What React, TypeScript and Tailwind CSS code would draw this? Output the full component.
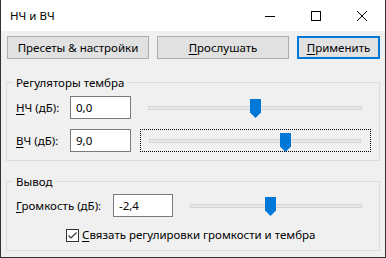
import React from "react";

function Thumb({ left }: { left: number }) {
  return (
    <svg
      className="absolute top-[3px]"
      style={{ left }}
      width="11"
      height="19"
      viewBox="0 0 11 19"
    >
      <polygon points="0,0 11,0 11,13.5 5.5,19 0,13.5" fill="#0078d7" />
    </svg>
  );
}

function Slider({
  width,
  thumb,
  focused,
}: {
  width: string;
  thumb: number;
  focused?: boolean;
}) {
  return (
    <div
      className={
        "relative h-[23px] flex items-center pl-[8px] pr-[9px] ml-[9px] " +
        width +
        (focused ? " border border-dotted border-black" : "")
      }
    >
      <div className="flex-1 h-[4px] bg-[#e7e7e7] border border-[#d6d6d6]" />
      <Thumb left={focused ? thumb - 1 : thumb} />
    </div>
  );
}

function Field({ value, width }: { value: string; width: string }) {
  return (
    <div
      className={
        "h-[23px] bg-white border border-[#7a7a7a] flex items-center pl-[5px] shrink-0 " +
        width
      }
    >
      {value}
    </div>
  );
}

export default function App() {
  return (
    <div className="w-[386px] h-[258px] bg-[#f0f0f0] border-x border-b border-[#333333] flex flex-col font-['Noto_Sans',sans-serif] text-[11.5px] leading-[16px] text-black overflow-hidden">
      {/* Title bar */}
      <div className="h-[31px] bg-white flex items-center shrink-0">
        <div className="flex-1 pl-[9px]">НЧ и ВЧ</div>
        <div className="w-[46px] h-full flex items-center justify-center">
          <svg width="10" height="10" viewBox="0 0 10 10">
            <line x1="0" y1="5.5" x2="10" y2="5.5" stroke="#000" strokeWidth="1" />
          </svg>
        </div>
        <div className="w-[46px] h-full flex items-center justify-center">
          <svg width="10" height="10" viewBox="0 0 10 10">
            <rect x="0.5" y="0.5" width="9" height="9" fill="none" stroke="#000" strokeWidth="1" />
          </svg>
        </div>
        <div className="w-[46px] h-full flex items-center justify-center">
          <svg width="10" height="10" viewBox="0 0 10 10">
            <line x1="0" y1="0" x2="10" y2="10" stroke="#000" strokeWidth="1" />
            <line x1="10" y1="0" x2="0" y2="10" stroke="#000" strokeWidth="1" />
          </svg>
        </div>
      </div>

      {/* Buttons */}
      <div className="flex mt-[5px] pl-[6px] gap-[8px]">
        <div className="w-[142px] h-[23px] bg-[#e1e1e1] border border-[#adadad] flex items-center justify-center">
          Пресеты &amp; настройки
        </div>
        <div className="w-[132px] h-[23px] bg-[#e1e1e1] border border-[#adadad] flex items-center justify-center">
          <span>
            <span className="underline underline-offset-[2px]">П</span>рослушать
          </span>
        </div>
        <div className="w-[83px] h-[23px] bg-[#e1e1e1] border-2 border-[#0078d7] flex items-center justify-center">
          <span>
            <span className="underline underline-offset-[2px]">П</span>рименить
          </span>
        </div>
      </div>

      {/* Group 1 */}
      <fieldset className="mx-[5px] mt-[16px] border border-[#dcdcdc] pl-[9px] pr-[8px] pt-[6px] pb-[8px]">
        <legend className="px-[3px] ml-[-3px] leading-[15px]">Регуляторы тембра</legend>
        <div className="flex items-center h-[23px]">
          <div className="w-[54px] shrink-0">
            <span className="underline underline-offset-[2px]">Н</span>Ч (дБ):
          </div>
          <Field value="0,0" width="w-[61px]" />
          <Slider width="w-[231px]" thumb={110} />
        </div>
        <div className="flex items-center h-[23px] mt-[10px]">
          <div className="w-[54px] shrink-0">
            <span className="underline underline-offset-[2px]">В</span>Ч (дБ):
          </div>
          <Field value="9,0" width="w-[61px]" />
          <Slider width="w-[231px]" thumb={140} focused />
        </div>
      </fieldset>

      {/* Group 2 */}
      <fieldset className="mx-[5px] mt-[13px] border border-[#dcdcdc] pl-[9px] pr-[8px] pt-[5px] pb-[7px]">
        <legend className="px-[3px] ml-[-3px] leading-[15px]">Вывод</legend>
        <div className="flex items-center h-[23px]">
          <div className="w-[97px] shrink-0">
            <span className="underline underline-offset-[2px]">Г</span>ромкость (дБ):
          </div>
          <Field value="-2,4" width="w-[60px]" />
          <Slider width="w-[189px]" thumb={83} />
        </div>
        <div className="flex items-center h-[16px] mt-[10px] pl-[50px]">
          <div className="w-[13px] h-[13px] bg-white border border-[#333333] flex items-center justify-center shrink-0">
            <svg width="11" height="11" viewBox="0 0 11 11">
              <polyline points="1.5,5.5 4,8 9.5,2.5" fill="none" stroke="#333333" strokeWidth="1.2" />
            </svg>
          </div>
          <div className="ml-[3px]">
            <span className="underline underline-offset-[2px]">С</span>вязать регулировки громкости и тембра
          </div>
        </div>
      </fieldset>
    </div>
  );
}
